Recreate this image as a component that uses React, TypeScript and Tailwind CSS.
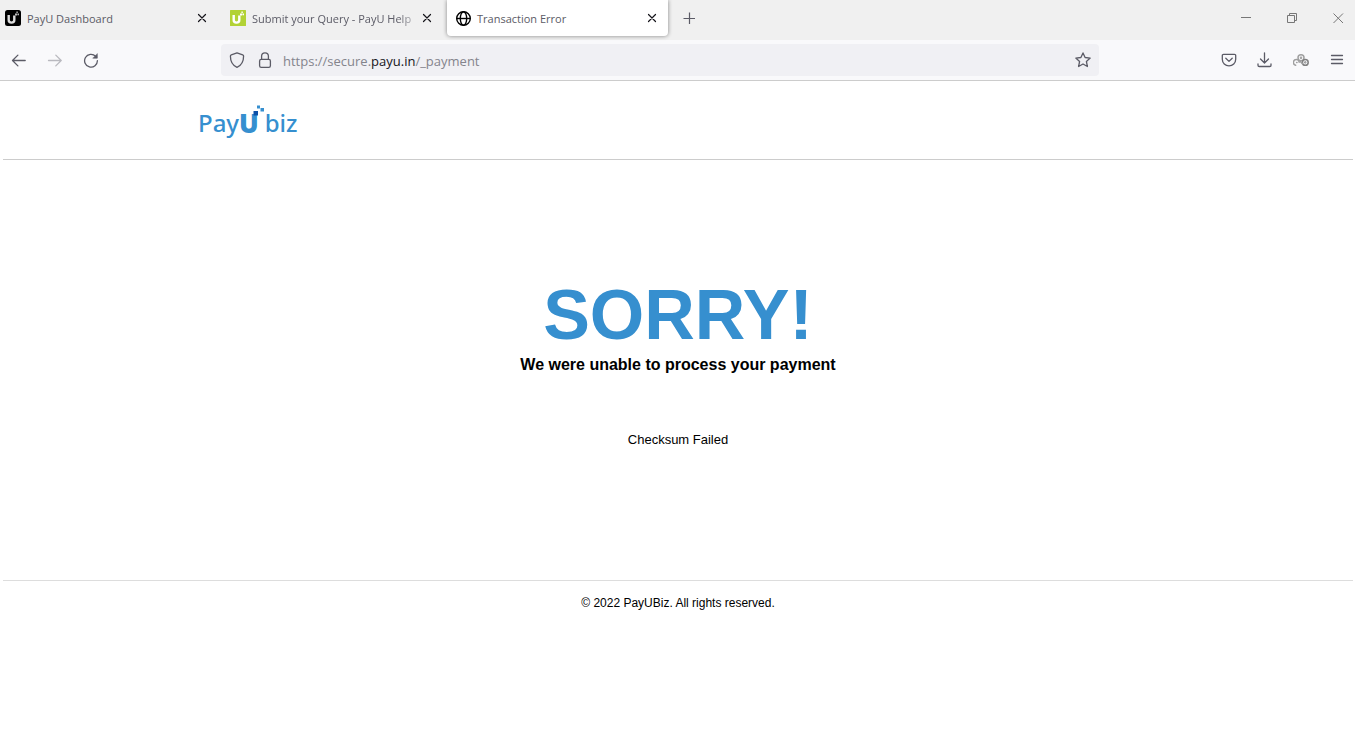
import React from "react";

const ui = "font-['Open_Sans','Noto_Sans',sans-serif]";

function CloseGlyph() {
  return (
    <svg viewBox="0 0 10 10" className="h-[10px] w-[10px]" fill="none" stroke="#15141a" strokeWidth="1.2" strokeLinecap="round" aria-hidden="true">
      <path d="M1.500 1.500 8.500 8.500M8.500 1.500 1.500 8.500" />
    </svg>
  );
}

function PayUIcon({ light }: { light?: boolean }) {
  return (
    <svg viewBox="0 0 16 16" className="h-4 w-4 shrink-0" aria-hidden="true">
      <rect width="16" height="16" rx={light ? 0.5 : 2.5} fill={light ? "#b2d235" : "#000"} />
      <path d="M3.700 5v5q0 2.600 2.800 2.600T9.300 10V5.500" fill="none" stroke={light ? "#fff" : "#ddd"} strokeWidth="2.400" />
      <path d="M10 3.600h2v2h-2zM12.400 3.600h1.600v1.600h-1.600zM11.400 1.600h1.400v1.400h-1.400z" fill={light ? "#fff" : "#bbb"} />
    </svg>
  );
}

function GlobeIcon() {
  return (
    <svg viewBox="0 0 16 16" className="h-4 w-4 shrink-0" fill="none" stroke="#000" strokeWidth="1.4" aria-hidden="true">
      <circle cx="8.500" cy="8.500" r="6.800" />
      <ellipse cx="8.500" cy="8.500" rx="3.200" ry="6.800" />
      <path d="M1.700 8.500h13.600" />
    </svg>
  );
}

function Tab({ title, icon, active, clipped }: { title: string; icon: React.ReactNode; active?: boolean; clipped?: boolean }) {
  return (
    <div
      className={
        active
          ? "-ml-[3px] flex h-9 w-[221px] items-center rounded-b bg-white pr-[11px] pl-2 shadow-[0_0_4px_rgba(0,0,0,0.45)]"
          : "flex h-9 w-[225px] items-center pr-[18px] pl-[5px]"
      }
    >
      <button className="flex min-w-0 flex-1 items-center gap-1.5 text-left">
        {icon}
        <span
          className={
            clipped
              ? "flex-1 pt-0.5 text-[11px] leading-4 whitespace-nowrap text-[#5b5b66] [mask-image:linear-gradient(to_left,transparent,black_24px)]"
              : "flex-1 pt-0.5 text-[11px] leading-4 whitespace-nowrap text-[#5b5b66]"
          }
        >
          {title}
        </span>
      </button>
      <button aria-label="Close tab" className="flex h-5 w-[10px] shrink-0 items-center justify-center">
        <CloseGlyph />
      </button>
    </div>
  );
}

function Tool({ label, children }: { label: string; children: React.ReactNode }) {
  return (
    <button aria-label={label} className="flex h-8 w-9 items-center justify-center">
      <svg viewBox="0 0 16 16" className="h-4 w-4" fill="none" stroke="#5b5b66" strokeWidth="1.3" strokeLinecap="round" strokeLinejoin="round" aria-hidden="true">
        {children}
      </svg>
    </button>
  );
}

function WindowButton({ label, d }: { label: string; d: string }) {
  return (
    <button aria-label={label} className="flex h-9 w-[46px] items-center justify-center">
      <svg viewBox="0 0 11 11" className="h-[11px] w-[11px]" fill="none" stroke="#777" aria-hidden="true">
        <path d={d} />
      </svg>
    </button>
  );
}

function TitleBar() {
  return (
    <div className="flex h-10 items-start justify-between bg-[#f0f0f0]">
      <div className="flex">
        <Tab title="PayU Dashboard" icon={<PayUIcon />} />
        <Tab title="Submit your Query - PayU Help" icon={<PayUIcon light />} clipped />
        <Tab title="Transaction Error" icon={<GlobeIcon />} active />
        <button aria-label="New tab" className="ml-[5px] flex h-9 w-8 items-center justify-center">
          <svg viewBox="0 0 12 12" className="h-3 w-3" fill="none" stroke="#5b5b66" strokeWidth="1.2" aria-hidden="true">
            <path d="M6.500 .5v12M.5 6.500h12" />
          </svg>
        </button>
      </div>
      <div className="-mr-[6px] flex">
        <WindowButton label="Minimize" d="M0 4.500h10" />
        <WindowButton label="Restore" d="M.5 2.500h7v7h-7zM2.500 2.500v-2h7v7h-2" />
        <WindowButton label="Close" d="M.5.5l9.500 9.500M10 .5l-9.500 9.500" />
      </div>
    </div>
  );
}

function NavBar() {
  return (
    <div className="flex h-[41px] items-center border-b border-[#cccccc] bg-[#f9f9fb] pl-px">
      <div className="flex">
        <Tool label="Back">
          <path d="M14.200 8.500H1.500M6.900 3.100 1.500 8.500l5.400 5.400" />
        </Tool>
        <span className="flex opacity-40">
          <Tool label="Forward">
            <path d="M1.500 8.500h12.700M8.800 3.100 14.200 8.500l-5.400 5.400" />
          </Tool>
        </span>
        <Tool label="Reload">
          <path d="M14.400 8.600A6.400 6.400 0 1 1 12.600 4.300" />
          <path d="M14.300 2v4.200h-4.200z" fill="#5b5b66" strokeWidth="0.6" />
        </Tool>
      </div>
      <div className="ml-28 flex h-8 min-w-0 flex-1 items-center rounded bg-[#f0f0f4] px-0.5">
        <button aria-label="Tracking protection" className="flex h-7 w-7 items-center justify-center">
          <svg viewBox="0 0 16 16" className="h-4 w-4" fill="none" stroke="#5b5b66" strokeWidth="1.3" strokeLinejoin="round" aria-hidden="true">
            <path d="M8 .8 13.7 2.8Q14.6 3.1 14.6 4C14.6 9.8 12.4 13.4 8 15.3 3.600 13.400 1.400 9.800 1.400 4Q1.400 3.100 2.300 2.800Z" />
          </svg>
        </button>
        <button aria-label="Site security" className="flex h-7 w-7 items-center justify-center">
          <svg viewBox="0 0 16 16" className="h-4 w-4" fill="none" stroke="#5b5b66" strokeWidth="1.3" aria-hidden="true">
            <rect x="2.600" y="7.400" width="10.800" height="7.900" rx="1.600" />
            <path d="M4.600 7.400V4.200a3.400 3.400 0 0 1 6.800 0v3.200" />
          </svg>
        </button>
        <a href="https://secure.payu.in/_payment" className="ml-1 flex-1 pt-0.5 text-[13px] leading-5 text-[#84848c]">
          https://secure.<span className="text-[#15141a]">payu.in</span>/_payment
        </a>
        <button aria-label="Bookmark this page" className="flex h-7 w-7 items-center justify-center">
          <svg viewBox="0 0 16 16" className="h-4 w-4" fill="none" stroke="#5b5b66" strokeWidth="1.3" strokeLinejoin="round" aria-hidden="true">
            <path d="m8 .9 2.100 4.600 5.100.6-3.800 3.400 1 5L8 12l-4.400 2.500 1-5L.8 6.100l5.100-.6z" />
          </svg>
        </button>
      </div>
      <div className="ml-28 flex">
        <Tool label="Save to Pocket">
          <path d="M2.500 2.300h11a1.200 1.200 0 0 1 1.200 1.200v3.700a6.700 6.700 0 0 1-13.400 0V3.500a1.200 1.200 0 0 1 1.200-1.200z" />
          <path d="M4.800 6.300 8 9.400l3.200-3.100" />
        </Tool>
        <Tool label="Downloads">
          <path d="M7.500 .8v10M3.500 7l4 4 4-4M1 12v1.200q0 1.300 1.300 1.300h10.400q1.300 0 1.300-1.300V12" />
        </Tool>
        <Tool label="Extension">
          <g stroke="#a0a0a0" strokeWidth="1.500">
            <path d="M2.600 13.200A2.900 2.900 0 1 1 6.200 10.200" />
            <circle cx="8" cy="5.700" r="3" />
            <circle cx="8" cy="5.700" r=".5" />
            <circle cx="12.300" cy="10.400" r="2.900" stroke="#808080" />
            <circle cx="12.300" cy="10.400" r=".4" stroke="#808080" />
            <path d="M3.600 10.600h.4M7 9 9.400 11.800" />
          </g>
        </Tool>
        <Tool label="Open application menu">
          <path d="M2.500 3.500h11M2.500 7.500h11M2.500 11.500h11" />
        </Tool>
      </div>
    </div>
  );
}

function Logo() {
  return (
    <a href="#" aria-label="PayUbiz" className="relative flex h-8 w-fit items-center font-['Noto_Sans','Open_Sans',sans-serif] text-2xl leading-8 font-medium text-[#368fcf]">
      <span>Pay</span>
      <span className="text-[26px] font-black">U</span>
      <span className="ml-1.5">biz</span>
      <svg viewBox="0 0 14 14" className="absolute -top-1 left-[54px] h-3.5 w-3.5" aria-hidden="true">
        <path d="M1.500 8h4.500v4.500H1.500z" fill="#0c50a8" />
        <path d="M5 2.500h3v3H5zM8.500 5h3.500v3.500H8.500z" fill="#368fcf" />
      </svg>
    </a>
  );
}

export default function App() {
  return (
    <div className="min-h-screen bg-white">
      <header className={ui}>
        <TitleBar />
        <NavBar />
      </header>
      <div className="pr-0.5 pl-[3px] font-['Liberation_Sans',Arial,sans-serif] text-black">
        <div className="border-b border-[#cccccc] pt-[26px] pb-5 pl-[195px]">
          <Logo />
        </div>
        <main className="flex flex-col items-center border-b border-[#dddddd] pt-[115px] pb-[130px] text-center">
          <h1 className="text-[70px] leading-20 font-bold text-[#368fcf]">SORRY!</h1>
          <h2 className="text-base leading-5 font-bold">We were unable to process your payment</h2>
          <p className="mt-[55px] text-[13px] leading-5">Checksum Failed</p>
        </main>
        <footer className="pt-3 text-center text-xs leading-5">© 2022 PayUBiz. All rights reserved.</footer>
      </div>
    </div>
  );
}
